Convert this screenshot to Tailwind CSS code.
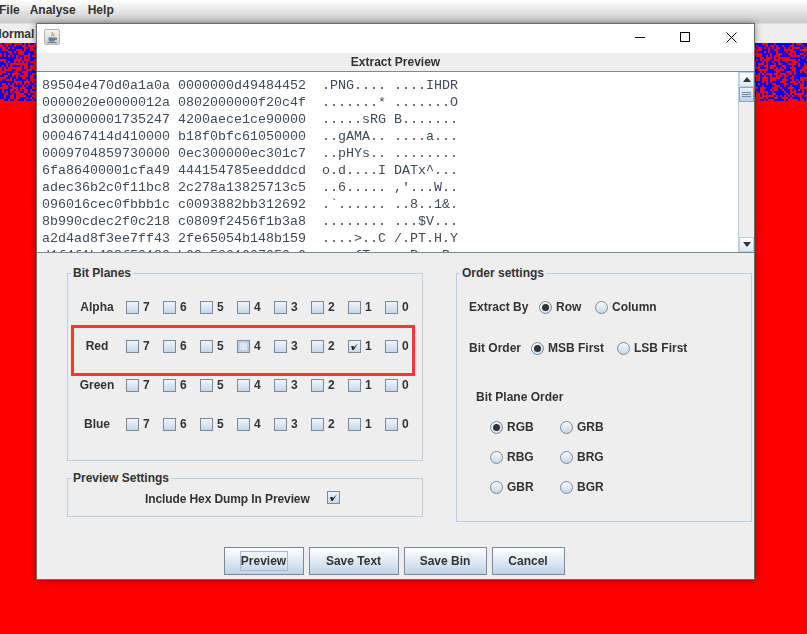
<!DOCTYPE html>
<html lang="en">
<head>
  <meta charset="UTF-8">
  <meta name="viewport" content="width=device-width, initial-scale=1.0">
  <title>Extract Preview</title>
  <script src="https://cdn.jsdelivr.net/npm/@tailwindcss/browser@4"></script>
</head>
<body class="relative h-[634px] w-[807px] overflow-hidden bg-[#ff0000] font-['Liberation_Sans',Arial,sans-serif] text-[12px] font-bold text-[#333]">
  <!-- app behind the dialog -->
  <div class="flex h-[23px] items-start gap-[10px] bg-linear-to-b from-white to-[#c9c9c9] pt-[3px] leading-[14px]">
    <span class="-ml-[1px]">File</span><span>Analyse</span><span class="ml-[2px]">Help</span>
  </div>
  <div class="flex h-[20px] items-center justify-between border-t border-[#ddd] bg-[#eee] leading-[14px]">
    <span class="-ml-[7px]">Normal</span>
  </div>
  <canvas id="noise" width="807" height="58" class="block h-[58px] w-[807px]"></canvas>

  <!-- dialog -->
  <div class="absolute left-[36px] top-[23px] flex h-[557px] w-[719px] flex-col border border-[#6a6a6a] bg-[#eee] shadow-[0_0_7px_rgba(0,0,0,0.45)]">
    <div class="flex h-[29px] shrink-0 items-center bg-white pb-[3px] pl-[7px]">
      <div class="flex h-[16px] w-[16px] items-center justify-center rounded-[2px] border border-[#b5b5b5] bg-linear-to-b from-[#f4f4f4] to-[#cfcfcf]">
        <svg width="12" height="13" viewBox="0 0 12 13" fill="none">
          <path d="M6.5 1C5 2.5 7.5 3 5.5 5M8 2.5C7 3.5 8.5 4 7.5 5" stroke="#d9822b" stroke-width="1"/>
          <path d="M2.5 6.5h6.5v2.5a2 2 0 0 1-2 1.5h-2.5a2 2 0 0 1-2-1.5z" fill="#5d7c99"/>
          <path d="M9 7h1.5v1.5H9" stroke="#5d7c99"/>
          <path d="M1.5 11.5h9" stroke="#5d7c99"/>
        </svg>
      </div>
      <div class="ml-auto flex items-center">
        <svg class="mr-[35px]" width="10" height="10" viewBox="0 0 10 10"><path d="M0 5.5h10" stroke="#000" stroke-width="1"/></svg>
        <svg class="mr-[36px]" width="10" height="10" viewBox="0 0 10 10"><rect x="0.5" y="0.5" width="9" height="9" fill="none" stroke="#000"/></svg>
        <svg class="mr-[17px]" width="11" height="11" viewBox="0 0 11 11"><path d="M0.5 0.5l10 10M10.5 0.5l-10 10" stroke="#000" stroke-width="1"/></svg>
      </div>
    </div>
    <div class="flex h-[18px] shrink-0 items-center justify-center leading-[14px]">Extract Preview</div>

    <div class="flex h-[182px] shrink-0 border-y border-[#7d8a96] bg-white">
      <pre class="flex-1 overflow-hidden pl-[5px] pt-[5px] font-['Liberation_Mono',monospace] text-[13.33px] font-normal leading-[17px] text-[#3d4a58]">89504e470d0a1a0a 0000000d49484452  .PNG.... ....IHDR
0000020e0000012a 0802000000f20c4f  .......* .......O
d300000001735247 4200aece1ce90000  .....sRG B.......
000467414d410000 b18f0bfc61050000  ..gAMA.. ....a...
0009704859730000 0ec300000ec301c7  ..pHYs.. ........
6fa86400001cfa49 444154785eedddcd  o.d....I DATx^...
adec36b2c0f11bc8 2c278a13825713c5  ..6..... ,'...W..
096016cec0fbbb1c c0093882bb312692  .`...... ..8..1&amp;.
8b990cdec2f0c218 c0809f2456f1b3a8  ........ ...$V...
a2d4ad8f3ee7ff43 2fe65054b148b159  ....&gt;..C /.PT.H.Y
d1f4f1b498f50180 b09c5201007050a0  ....{T.. ..R...P.</pre>
      <div class="flex w-[16px] shrink-0 flex-col border-l border-[#b8cfe5] bg-[#eee]">
        <div class="flex h-[15px] items-center justify-center border border-[#b8cfe5] bg-linear-to-b from-white to-[#dfe8f2]">
          <svg width="8" height="5" viewBox="0 0 8 5"><path d="M4 0L8 5H0z" fill="#333"/></svg>
        </div>
        <div class="flex h-[15px] flex-col items-center justify-center gap-[1px] border border-[#8fa8c2] bg-linear-to-b from-[#e9f0f7] to-[#bcd0e5]">
          <div class="h-[1px] w-[9px] bg-[#6a8ab0]"></div>
          <div class="h-[1px] w-[9px] bg-[#6a8ab0]"></div>
          <div class="h-[1px] w-[9px] bg-[#6a8ab0]"></div>
        </div>
        <div class="flex-1"></div>
        <div class="flex h-[15px] items-center justify-center border border-[#b8cfe5] bg-linear-to-b from-white to-[#dfe8f2]">
          <svg width="8" height="5" viewBox="0 0 8 5"><path d="M0 0H8L4 5z" fill="#333"/></svg>
        </div>
      </div>
    </div>

    <div class="flex pl-[30px] pt-[20px]">
      <div class="flex w-[356px] flex-col gap-[17px]">
        <div class="relative h-[188px] border border-[#b8cfe5] pt-[14px]">
          <span class="absolute -top-[8px] left-[3px] bg-[#eee] px-[2px] leading-[14px]">Bit Planes</span>
          <div id="planes"></div>
          <div class="absolute left-[3px] top-[51px] h-[51px] w-[344px] border-[3px] border-[#ff3333]"></div>
        </div>
        <div class="relative flex h-[39px] items-center gap-[17px] border border-[#b8cfe5] pl-[77px]">
          <span class="absolute -top-[8px] left-[3px] bg-[#eee] px-[2px] leading-[14px]">Preview Settings</span>
          <span class="pt-[2px] tracking-[-0.1px]">Include Hex Dump In Preview</span>
          <div class="flex h-[13px] w-[13px] items-center justify-center border border-[#7a8a99] bg-linear-to-b from-[#f0f5fa] to-[#c6d7e9]">
            <svg width="9" height="9" viewBox="0 0 9 9"><path d="M1 4L3.6 4 3.6 5.6 8 1.2 3.6 8 2.4 8z" fill="#222"/></svg>
          </div>
        </div>
      </div>

      <div class="relative ml-[33px] h-[249px] w-[296px] border border-[#b8cfe5] pl-[12px] pt-[23px]">
        <span class="absolute -top-[8px] left-[3px] bg-[#eee] px-[2px] leading-[14px]">Order settings</span>
        <div class="flex h-[20px] items-center">
          <span class="w-[70px]">Extract By</span>
          <div class="flex w-[56px] items-center gap-[4px]"><div class="flex h-[13px] w-[13px] items-center justify-center rounded-full border border-[#7a8a99] bg-linear-to-br from-[#f8fafc] to-[#c6d7e9]"><div class="h-[7px] w-[7px] rounded-full bg-[#333]"></div></div>Row</div>
          <div class="flex items-center gap-[4px]"><div class="h-[13px] w-[13px] rounded-full border border-[#7a8a99] bg-linear-to-b from-[#f8fafc] to-[#c6d7e9]"></div>Column</div>
        </div>
        <div class="mt-[21px] flex h-[20px] items-center">
          <span class="w-[62px]">Bit Order</span>
          <div class="flex w-[86px] items-center gap-[4px]"><div class="flex h-[13px] w-[13px] items-center justify-center rounded-full border border-[#7a8a99] bg-linear-to-br from-[#f8fafc] to-[#c6d7e9]"><div class="h-[7px] w-[7px] rounded-full bg-[#333]"></div></div>MSB First</div>
          <div class="flex items-center gap-[4px]"><div class="h-[13px] w-[13px] rounded-full border border-[#7a8a99] bg-linear-to-b from-[#f8fafc] to-[#c6d7e9]"></div>LSB First</div>
        </div>
        <div class="ml-[7px] mt-[29px] flex h-[20px] items-center">Bit Plane Order</div>
        <div class="ml-[21px] mt-[5px] grid w-[140px] grid-cols-[70px_70px] auto-rows-[30px] items-center">
          <div class="flex items-center gap-[4px]"><div class="flex h-[13px] w-[13px] items-center justify-center rounded-full border border-[#7a8a99] bg-linear-to-br from-[#f8fafc] to-[#c6d7e9]"><div class="h-[7px] w-[7px] rounded-full bg-[#333]"></div></div>RGB</div>
          <div class="flex items-center gap-[4px]"><div class="h-[13px] w-[13px] rounded-full border border-[#7a8a99] bg-linear-to-b from-[#f8fafc] to-[#c6d7e9]"></div>GRB</div>
          <div class="flex items-center gap-[4px]"><div class="h-[13px] w-[13px] rounded-full border border-[#7a8a99] bg-linear-to-b from-[#f8fafc] to-[#c6d7e9]"></div>RBG</div>
          <div class="flex items-center gap-[4px]"><div class="h-[13px] w-[13px] rounded-full border border-[#7a8a99] bg-linear-to-b from-[#f8fafc] to-[#c6d7e9]"></div>BRG</div>
          <div class="flex items-center gap-[4px]"><div class="h-[13px] w-[13px] rounded-full border border-[#7a8a99] bg-linear-to-b from-[#f8fafc] to-[#c6d7e9]"></div>GBR</div>
          <div class="flex items-center gap-[4px]"><div class="h-[13px] w-[13px] rounded-full border border-[#7a8a99] bg-linear-to-b from-[#f8fafc] to-[#c6d7e9]"></div>BGR</div>
        </div>
      </div>
    </div>

    <div class="mt-[25px] flex justify-center gap-[5px] pr-[3px]">
      <div class="flex h-[28px] w-[80px] items-center justify-center border border-[#7a8a99] bg-linear-to-b from-white to-[#c0d3e7]"><span class="flex h-[20px] w-[48px] items-center justify-center border border-[#a6bbd2]">Preview</span></div>
      <div class="flex h-[28px] w-[90px] items-center justify-center border border-[#7a8a99] bg-linear-to-b from-white to-[#c0d3e7]">Save Text</div>
      <div class="flex h-[28px] w-[83px] items-center justify-center border border-[#7a8a99] bg-linear-to-b from-white to-[#c0d3e7]">Save Bin</div>
      <div class="flex h-[28px] w-[73px] items-center justify-center border border-[#7a8a99] bg-linear-to-b from-white to-[#c0d3e7]">Cancel</div>
    </div>
  </div>

  <script>
    // bit plane rows
    const tick = '<svg width="9" height="9" viewBox="0 0 9 9"><path d="M1 4L3.6 4 3.6 5.6 8 1.2 3.6 8 2.4 8z" fill="#222"/></svg>';
    const planes = document.getElementById("planes");
    ["Alpha", "Red", "Green", "Blue"].forEach(name => {
      const row = document.createElement("div");
      row.className = "flex h-[39px] items-center";
      let html = `<span class="w-[58px] pb-[2px] text-center">${name}</span>`;
      for (let bit = 7; bit >= 0; bit--) {
        const hover = name === "Red" && bit === 4;
        const box = hover
          ? "flex h-[13px] w-[13px] items-center justify-center border border-[#7a8a99] bg-[#bccfe3]"
          : "flex h-[13px] w-[13px] items-center justify-center border border-[#7a8a99] bg-linear-to-b from-[#f0f5fa] to-[#c6d7e9]";
        let inner = "";
        if (name === "Red" && bit === 1) inner = tick;
        if (hover) inner = '<div class="h-[7px] w-[7px] bg-[#dde7f1]"></div>';
        html += `<div class="flex w-[37px] items-center gap-[4px]"><div class="${box}">${inner}</div><span class="pb-[2px]">${bit}</span></div>`;
      }
      row.innerHTML = html;
      planes.appendChild(row);
    });

    // random bit plane image behind the dialog
    const canvas = document.getElementById("noise");
    const ctx = canvas.getContext("2d");
    let seed = 12345;
    function rnd() {
      seed = (seed * 1103515245 + 12345) & 0x7fffffff;
      return (seed >> 8) / 0x7fffff;
    }
    for (let y = 0; y < 58; y += 2) {
      for (let x = 0; x < 807; x += 2) {
        ctx.fillStyle = rnd() < 0.5 ? "#0000ff" : "#ff0000";
        ctx.fillRect(x, y, 2, 2);
      }
    }
  </script>
</body>
</html>
